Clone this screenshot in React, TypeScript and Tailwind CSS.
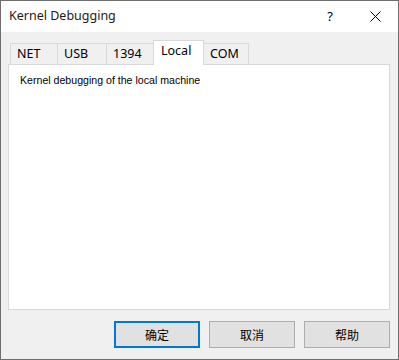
import React from "react";

const tabs = [
  { label: "NET", w: "w-[47px]", selected: false },
  { label: "USB", w: "w-[49px]", selected: false },
  { label: "1394", w: "w-[47px]", selected: false },
  { label: "Local", w: "w-[51px]", selected: true },
  { label: "COM", w: "w-[45px]", selected: false },
];

function Tab({ label, w, selected, last }: { label: string; w: string; selected: boolean; last: boolean }) {
  if (selected) {
    return (
      <div
        className={`${w} relative z-10 -mb-px h-[25px] border-x border-t border-[#d9d9d9] bg-white pl-[7px] pt-[1px] text-[12.5px] leading-[18px] text-black`}
      >
        {label}
      </div>
    );
  }
  return (
    <div
      className={`${w} h-[21px] border-t border-[#d9d9d9] bg-[#f0f0f0] pl-[6px] pt-[1px] text-[12.5px] leading-[18px] text-black ${
        last ? "border-r pl-[4px]" : "border-l"
      }`}
    >
      {label}
    </div>
  );
}

function DialogButton({ label, isDefault }: { label: string; isDefault?: boolean }) {
  return (
    <button
      className={`flex h-[27px] w-[86px] items-center justify-center bg-[#e1e1e1] text-[12px] text-black ${
        isDefault ? "border-2 border-[#0078d7]" : "border border-[#adadad]"
      }`}
      style={{ fontFamily: '"Noto Sans CJK SC", "Noto Sans", sans-serif' }}
    >
      {label}
    </button>
  );
}

export default function App() {
  return (
    <div
      className="flex h-[360px] w-[399px] flex-col border border-[#6e6e6e] bg-[#f0f0f0]"
      style={{ fontFamily: '"Noto Sans", "Noto Sans CJK SC", sans-serif' }}
    >
      {/* title bar */}
      <div className="flex h-[31px] shrink-0 items-center bg-white">
        <span className="pl-[8px] text-[12.5px] text-[#1a1a1a]">Kernel Debugging</span>
        <span className="ml-auto mr-[37px] text-[13px] text-black">?</span>
        <svg width="11" height="11" viewBox="0 0 11 11" className="mr-[17px]">
          <path d="M0.5 0.5 L10.5 10.5 M10.5 0.5 L0.5 10.5" stroke="#000" strokeWidth="1" />
        </svg>
      </div>

      {/* body */}
      <div className="flex flex-1 flex-col pl-[7px] pr-[8px] pt-[8px]">
        <div className="ml-[2px] flex h-[24px] items-end">
          {tabs.map((t, i) => (
            <Tab key={t.label} {...t} last={i === tabs.length - 1} />
          ))}
        </div>
        <div className="h-[246px] w-[382px] border border-[#d9d9d9] bg-white">
          <p
            className="pl-[11px] pt-[9px] text-[10.6px] leading-[13px] text-black"
            style={{ fontFamily: '"Liberation Sans", Arial, sans-serif' }}
          >
            Kernel debugging of the local machine
          </p>
        </div>
        <div className="mt-[11px] flex justify-end gap-[9px]">
          <DialogButton label="确定" isDefault />
          <DialogButton label="取消" />
          <DialogButton label="帮助" />
        </div>
      </div>
    </div>
  );
}
